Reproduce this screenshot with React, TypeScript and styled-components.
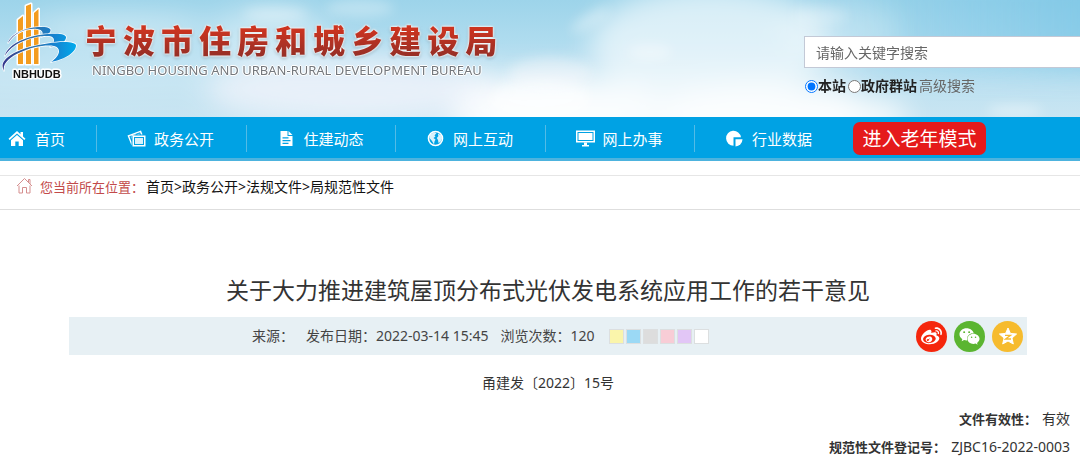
import React from 'react';
import styled, { createGlobalStyle } from 'styled-components';
import { FaWeibo, FaWeixin } from 'react-icons/fa';

const GlobalStyle = createGlobalStyle`
  * { box-sizing: border-box; }
  body {
    margin: 0;
    background: #fff;
    color: #333;
    font-family: "Noto Sans", "Noto Sans CJK SC", sans-serif;
    font-size: 14px;
    line-height: 20px;
  }
  a { color: inherit; text-decoration: none; }
`;

const Header = styled.header`
  position: relative;
  isolation: isolate;
  overflow: hidden;
  display: flex;
  justify-content: space-between;
  height: 117px;
  background: linear-gradient(180deg, #9dd4ea 0%, #b4def0 45%, #c9e5f2 100%);
`;

const Sky = styled.svg`
  position: absolute;
  inset: 0;
  width: 100%;
  height: 100%;
  z-index: -1;
`;

const Brand = styled.a`
  display: flex;
  align-items: flex-start;
`;

const BrandText = styled.div`
  display: flex;
  flex-direction: column;
  padding: 21px 0 0 5px;
`;

const SiteName = styled.h1`
  display: flex;
  gap: 6px;
  margin: 0;
  font-size: 32px;
  line-height: 40px;
  font-weight: 900;
  filter: drop-shadow(0 0 1px #fff) drop-shadow(0 0 1px #fff) drop-shadow(0 1px 1px rgba(60, 90, 110, 0.4));

  span {
    color: transparent;
    background: linear-gradient(180deg, #cc3420 20%, #982f26 85%);
    background-clip: text;
    -webkit-background-clip: text;
  }
`;

const SiteNameLatin = styled.p`
  margin: 0 0 0 7px;
  font-size: 13px;
  line-height: 18px;
  color: #74787d;
  white-space: nowrap;
  text-shadow: 1px 0 #fff, -1px 0 #fff, 0 1px #fff, 0 -1px #fff;
`;

const Search = styled.form`
  flex: 0 0 276px;
  padding-top: 36px;
`;

const SearchBox = styled.input`
  display: block;
  width: 100%;
  height: 32px;
  padding: 0 11px;
  border: 1px solid #c3c9d6;
  border-right: 0;
  border-radius: 0;
  background: #fff;
  font: inherit;
  color: #555;

  &::placeholder { color: #666; opacity: 1; }
`;

const Scope = styled.div`
  display: flex;
  align-items: center;
  gap: 2px;
  padding: 8px 0 0 1px;
  color: #666;
`;

const ScopeOption = styled.label`
  display: flex;
  align-items: center;
  font-weight: 700;
  color: #222;

  input { width: 13px; height: 13px; margin: 0; }
`;

const NavBar = styled.nav`
  display: flex;
  align-items: center;
  height: 44px;
  padding-top: 2px;
  background: #00a2e4;
  border-bottom: 3px solid #4db3de;
`;

const NavList = styled.ul`
  display: grid;
  grid-template-columns: 97px repeat(4, 1fr) 127px;
  width: 822px;
  margin: 0;
  padding: 0;
  list-style: none;
`;

const NavItem = styled.li`
  height: 27px;
  padding-left: 30px;
  border-right: 1px solid #52bbe6;

  &:first-child { padding-left: 8px; }
  &:last-child { border-right: 0; }
`;

const NavLink = styled.a`
  display: grid;
  grid-template-columns: 19px auto;
  align-items: center;
  justify-content: start;
  gap: 8px;
  height: 27px;
  font-size: 15px;
  color: #fff;
  white-space: nowrap;

  svg { display: block; }
`;

const SeniorButton = styled.button`
  width: 133px;
  height: 33px;
  margin-left: 31px;
  padding: 0;
  border: 0;
  border-radius: 7px;
  background: #e51a1b;
  color: #fff;
  font: inherit;
  font-size: 19px;
`;

const Breadcrumb = styled.nav`
  display: flex;
  align-items: flex-start;
  height: 35px;
  margin-top: 14px;
  padding: 1px 16px 0;
  border-top: 1px solid #e6e6e6;
  border-bottom: 1px solid #dedede;
  color: #111;

  svg { flex: none; margin-right: 7px; }
`;

const CrumbLabel = styled.span`
  margin-right: 2px;
  font-size: 13px;
  color: #c24a4a;
`;

const Article = styled.article`
  padding: 62px 10px 0 26px;
`;

const Title = styled.h2`
  margin: 0;
  font-size: 23px;
  line-height: 36px;
  font-weight: 400;
  text-align: center;
`;

const MetaBar = styled.div`
  display: flex;
  align-items: center;
  height: 38px;
  margin: 9px 43px 0;
  padding: 0 4px 0 183px;
  background: #e7f0f4;
  color: #444;
  white-space: nowrap;
`;

const MetaItem = styled.span`
  margin-right: 12px;
`;

const Swatches = styled.div`
  display: flex;
  gap: 2px;
  margin-left: 2px;
`;

const Swatch = styled.button<{ $color: string }>`
  width: 15px;
  height: 15px;
  padding: 0;
  border: 1px solid #dcdfe0;
  background: ${(p) => p.$color};
`;

const Share = styled.div`
  display: flex;
  gap: 7px;
  margin-left: auto;
`;

const ShareLink = styled.a<{ $color: string }>`
  display: flex;
  align-items: center;
  justify-content: center;
  width: 31px;
  height: 31px;
  border-radius: 50%;
  background: ${(p) => p.$color};
  color: #fff;
`;

const DocNumber = styled.p`
  margin: 18px 0 0;
  text-align: center;
`;

const Facts = styled.dl`
  margin: 12px 0 0;
`;

const Fact = styled.div`
  display: flex;
  justify-content: flex-end;
  align-items: center;
  gap: 5px;
  height: 28px;

  dt { font-size: 13px; font-weight: 700; }
  dd { margin: 0; }
`;

const SkyArt = () => (
  <Sky viewBox="0 0 1080 117" preserveAspectRatio="none" aria-hidden="true">
    <defs>
      <filter id="soft" x="-30%" y="-50%" width="160%" height="200%">
        <feGaussianBlur stdDeviation="14" />
      </filter>
      <filter id="puff" x="-30%" y="-50%" width="160%" height="200%">
        <feGaussianBlur stdDeviation="6" />
      </filter>
      <linearGradient id="deep" x1="0" x2="1">
        <stop offset="0" stopColor="#74c3e5" stopOpacity="0" />
        <stop offset="1" stopColor="#74c3e5" />
      </linearGradient>
      <linearGradient id="haze" x1="0" x2="0" y1="0" y2="1">
        <stop offset="0.4" stopColor="#fff" stopOpacity="0" />
        <stop offset="1" stopColor="#fff" />
      </linearGradient>
    </defs>
    <g filter="url(#soft)">
      <rect x="800" y="-30" width="320" height="100" fill="url(#deep)" opacity="0.7" />
      <rect x="450" width="400" height="140" fill="url(#haze)" opacity="0.9" />
    </g>
    <g filter="url(#soft)" fill="#fff">
      <ellipse cx="120" cy="28" rx="90" ry="14" opacity="0.4" />
      <ellipse cx="90" cy="75" rx="180" ry="20" opacity="0.2" />
      <ellipse cx="270" cy="35" rx="60" ry="30" opacity="0.35" />
      <ellipse cx="355" cy="90" rx="150" ry="34" fill="#f1f4fb" opacity="0.8" />
      <ellipse cx="710" cy="45" rx="120" ry="60" opacity="0.6" />
      <ellipse cx="560" cy="110" rx="100" ry="32" opacity="0.8" />
      <ellipse cx="780" cy="118" rx="130" ry="30" opacity="0.8" />
      <ellipse cx="840" cy="30" rx="60" ry="30" opacity="0.25" />
    </g>
    <g filter="url(#puff)" fill="#fff">
      <ellipse cx="360" cy="8" rx="34" ry="9" opacity="0.3" />
      <ellipse cx="275" cy="14" rx="32" ry="7" opacity="0.35" />
      <ellipse cx="550" cy="74" rx="42" ry="16" fill="#f6f7fc" opacity="0.5" />
      <ellipse cx="540" cy="100" rx="50" ry="20" opacity="0.5" />
      <ellipse cx="590" cy="20" rx="22" ry="6" opacity="0.35" transform="rotate(-30 590 20)" />
      <ellipse cx="650" cy="52" rx="22" ry="8" opacity="0.35" />
      <ellipse cx="820" cy="16" rx="28" ry="9" opacity="0.25" />
      <ellipse cx="1015" cy="111" rx="28" ry="6" opacity="0.4" />
    </g>
  </Sky>
);

const Emblem = () => (
  <svg width="80" height="84" viewBox="0 0 80 84" aria-hidden="true">
    <defs>
      <linearGradient id="wave" gradientUnits="userSpaceOnUse" x1="2" x2="76" y1="0" y2="0">
        <stop offset="0" stopColor="#33348c" />
        <stop offset="0.4" stopColor="#3474a8" />
        <stop offset="0.7" stopColor="#1681cf" />
        <stop offset="1" stopColor="#00aaec" />
      </linearGradient>
    </defs>
    <g stroke="#fff" strokeLinejoin="round" paintOrder="stroke">
      <g fill="#f39c1f" strokeWidth="3">
        <path d="M18 20 23 16V64H18Z" />
        <path d="M26 6 31 4V64H26Z" />
        <path d="M34 13 38.500 9V64H34Z" />
      </g>
      <g fill="url(#wave)" strokeWidth="1.400">
        <path d="M8 43C12 32 30 26.500 42 27C49 27 52 29 50 32C49 34 46 36 41 37C44 33 43 30 37 29C27 28 15 32 8 43Z" />
        <path d="M5 56C8 43 30 35 48 34C59 33 67 34 66 38C65 43 57 46 50 47C55 43 56 37 49 36C34 35 11 43 5 56Z" />
        <path d="M4 71C-2 61 12 52 30 47C48 42 77 39 76 46C75 54 62 60 51 62C60 56 62 48 54 46C38 43 0 56 4 71Z" />
      </g>
      <text x="13" y="78" fontFamily="Liberation Sans, sans-serif" fontSize="11" fontWeight="700" fill="#111" strokeWidth="3">
        NBHUDB
      </text>
    </g>
  </svg>
);

const navIcons: Record<string, React.ReactNode> = {
  home: (
    <>
      <path d="M9 2 .500 9.700 1.700 11 9 4.600 16.300 11 17.500 9.700 15 7.400V3H12.500V5.200Z" />
      <path d="M9 6 3 11.200V17H7.300V12.500H10.700V17H15V11.200Z" />
    </>
  ),
  photos: (
    <>
      <path d="M5.500 6.500H18.500V17.500H5.500ZM7 8V16H17V8Z" fillRule="evenodd" />
      <path d="M8 9H16V15H8Z" opacity="0.85" />
      <path d="M.5 6.500 14 1.500 15.500 5.500H14L13 3.300 2.300 7.300 4.500 13V16.500Z" />
      <path d="M3.600 7.700 12.400 4.500 12.800 5.500H4.500V10Z" opacity="0.75" />
    </>
  ),
  page: (
    <path
      d="M3.500 2H10.500V7H15.500V17H3.500ZM11.500 2 15.500 6H11.500ZM5.500 8.300V9.500H11.500V8.300ZM5.500 11V12.200H13.500V11ZM5.500 13.700V14.900H11.500V13.700Z"
      fillRule="evenodd"
    />
  ),
  globe: (
    <>
      <circle cx="9.500" cy="9.500" r="7" fill="none" stroke="#fff" strokeWidth="1.600" />
      <path d="M4 5.500 8 3.200 10.500 4 8.500 6.500 9.500 7.500 7.500 9 9.500 10.500 8.500 12.500 8 15.500 6 12 3.500 9Z" opacity="0.85" />
      <path d="M12 4.500 15.500 6.500 16 9.500 14.500 13 12.500 14 12 11 10.800 9 12.300 7.200Z" opacity="0.85" />
    </>
  ),
  monitor: (
    <>
      <path d="M0 1.500H19V13.500H0ZM1.500 3V12H17.500V3Z" fillRule="evenodd" />
      <path d="M2.500 4H16.500V11H2.500ZM8 13.500H11V16H13V17.500H6V16H8Z" />
    </>
  ),
  pie: (
    <>
      <path d="M8.500 9V16.800A7.500 7.500 0 1 1 16 8.200H8.500Z" />
      <path d="M10.500 10.200H17.500A7.500 7.500 0 0 1 10.500 17.500Z" />
    </>
  ),
};

const navItems = [
  { label: '首页', icon: 'home' },
  { label: '政务公开', icon: 'photos' },
  { label: '住建动态', icon: 'page' },
  { label: '网上互动', icon: 'globe' },
  { label: '网上办事', icon: 'monitor' },
  { label: '行业数据', icon: 'pie' },
];

const crumbs = ['首页', '政务公开', '法规文件', '局规范性文件'];

const swatches = [
  { name: '黄色', color: '#faf5ab' },
  { name: '蓝色', color: '#9bd9f5' },
  { name: '灰色', color: '#dddddd' },
  { name: '粉色', color: '#f8cdd6' },
  { name: '紫色', color: '#e2c6f6' },
  { name: '白色', color: '#ffffff' },
];

export default function App() {
  return (
    <>
      <GlobalStyle />
      <Header>
        <SkyArt />
        <Brand href="#">
          <Emblem />
          <BrandText>
            <SiteName>
              {Array.from('宁波市住房和城乡建设局').map((char) => (
                <span key={char}>{char}</span>
              ))}
            </SiteName>
            <SiteNameLatin>NINGBO HOUSING AND URBAN-RURAL DEVELOPMENT BUREAU</SiteNameLatin>
          </BrandText>
        </Brand>
        <Search>
          <SearchBox type="text" placeholder="请输入关键字搜索" aria-label="请输入关键字搜索" />
          <Scope>
            <ScopeOption>
              <input type="radio" name="scope" defaultChecked />
              本站
            </ScopeOption>
            <ScopeOption>
              <input type="radio" name="scope" />
              政府群站
            </ScopeOption>
            <a href="#">高级搜索</a>
          </Scope>
        </Search>
      </Header>

      <NavBar>
        <NavList>
          {navItems.map((item) => (
            <NavItem key={item.label}>
              <NavLink href="#">
                <svg width="19" height="19" viewBox="0 0 19 19" fill="#fff" aria-hidden="true">
                  {navIcons[item.icon]}
                </svg>
                {item.label}
              </NavLink>
            </NavItem>
          ))}
        </NavList>
        <SeniorButton type="button">进入老年模式</SeniorButton>
      </NavBar>

      <Breadcrumb>
        <svg width="17" height="17" viewBox="0 0 17 17" fill="none" stroke="#d58f8f" aria-hidden="true">
          <path d="M1 9 8.500 1.500 16 9M12.500 5V2.500H14V7M3 8.500V16H6.500V10.500H10.500V16H14V8.500" />
        </svg>
        <CrumbLabel>您当前所在位置：</CrumbLabel>
        {crumbs.map((crumb, i) => (
          <React.Fragment key={crumb}>
            {i > 0 && <span>&gt;</span>}
            <a href="#">{crumb}</a>
          </React.Fragment>
        ))}
      </Breadcrumb>

      <Article>
        <Title>关于大力推进建筑屋顶分布式光伏发电系统应用工作的若干意见</Title>
        <MetaBar>
          <MetaItem>来源：</MetaItem>
          <MetaItem>发布日期：2022-03-14 15:45</MetaItem>
          <MetaItem>浏览次数：120</MetaItem>
          <Swatches>
            {swatches.map((s) => (
              <Swatch key={s.name} type="button" $color={s.color} aria-label={s.name} />
            ))}
          </Swatches>
          <Share>
            <ShareLink href="#" $color="#f5260c" aria-label="微博">
              <FaWeibo size={21} />
            </ShareLink>
            <ShareLink href="#" $color="#5bb531" aria-label="微信">
              <FaWeixin size={21} />
            </ShareLink>
            <ShareLink href="#" $color="#f6bb2e" aria-label="QQ空间">
              <svg width="20" height="20" viewBox="0 0 20 20" aria-hidden="true">
                <path
                  d="M10 2 12.400 7.400 18.600 8 14 12 15.300 18 10 15 4.700 18 6 12 1.400 8 7.600 7.400Z"
                  fill="#fff"
                  stroke="#fff"
                  strokeLinejoin="round"
                />
                <path d="M7 9.300H12.500L7.500 13H13" fill="none" stroke="#f6bb2e" strokeWidth="1.300" />
              </svg>
            </ShareLink>
          </Share>
        </MetaBar>
        <DocNumber>甬建发〔2022〕15号</DocNumber>
        <Facts>
          <Fact>
            <dt>文件有效性：</dt>
            <dd>有效</dd>
          </Fact>
          <Fact>
            <dt>规范性文件登记号：</dt>
            <dd>ZJBC16-2022-0003</dd>
          </Fact>
        </Facts>
      </Article>
    </>
  );
}
